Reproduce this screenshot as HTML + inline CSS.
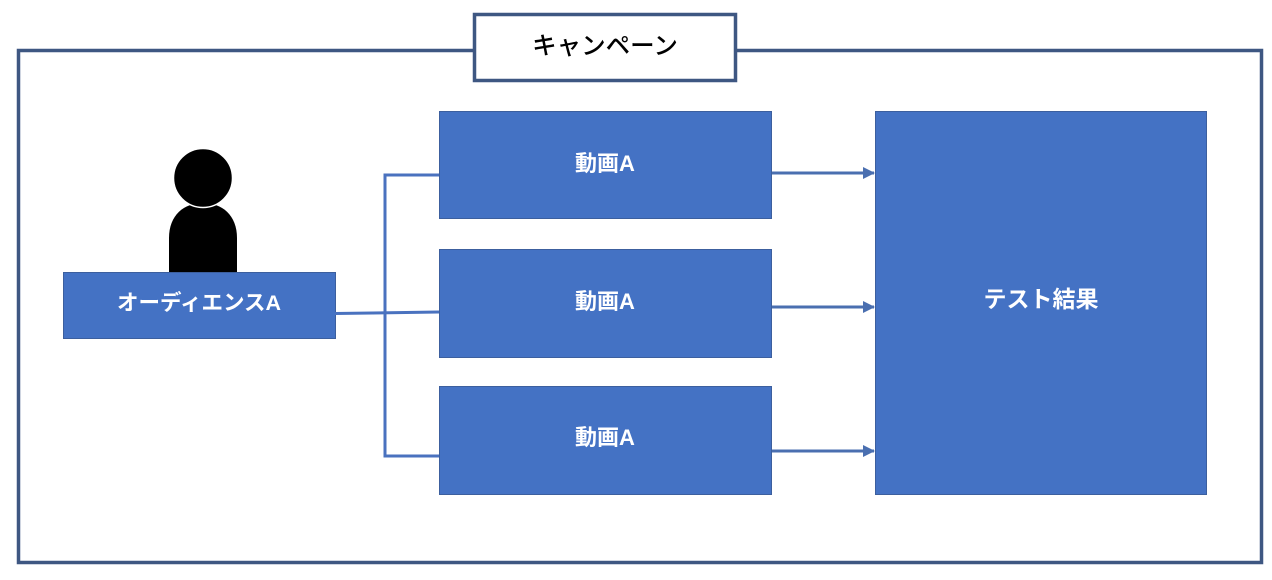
<!DOCTYPE html>
<html><head><meta charset="utf-8"><style>
html,body{margin:0;padding:0;background:#fff;width:1272px;height:580px;overflow:hidden}
svg{display:block}
text{font-family:"Liberation Sans","Noto Sans CJK JP",sans-serif}
</style></head><body>
<svg width="1272" height="580" viewBox="0 0 1272 580" xmlns="http://www.w3.org/2000/svg">
<defs>
<marker id="ar" markerWidth="12" markerHeight="12" refX="11" refY="6" orient="auto" markerUnits="userSpaceOnUse">
<path d="M0,0 L12,6 L0,12 Z" fill="#4a6fb0"/></marker>
</defs>
<rect x="18.5" y="50.5" width="1243" height="512" fill="#fff" stroke="#3e5782" stroke-width="3.5"/>
<rect x="474.5" y="14.5" width="261" height="66" fill="#fff" stroke="#3e5782" stroke-width="3.5"/>
<text x="605" y="54" font-size="24.5" font-weight="500" text-anchor="middle" fill="#000">キャンペーン</text>
<path d="M169,272 L169,238 C169,215 184,203 203,203 C222,203 237,215 237,238 L237,272 Z" fill="#000"/>
<circle cx="203" cy="178" r="29.5" fill="#000" stroke="#fff" stroke-width="1.5"/>
<rect x="63.5" y="272.5" width="272" height="66" fill="#4472c4" stroke="#3c5f9e" stroke-width="1"/>
<text x="199" y="310" font-size="21.5" font-weight="bold" text-anchor="middle" fill="#fff">オーディエンスA</text>
<g stroke="#4a72bf" stroke-width="3" fill="none">
<polyline points="439,175 385,175 385,456 439,456"/>
<line x1="335" y1="313.5" x2="439" y2="312"/>
</g>
<g stroke="#4a6fb0" stroke-width="3">
<line x1="771" y1="173" x2="874" y2="173" marker-end="url(#ar)"/>
<line x1="771" y1="307" x2="874" y2="307" marker-end="url(#ar)"/>
<line x1="771" y1="451" x2="874" y2="451" marker-end="url(#ar)"/>
</g>
<g fill="#4472c4" stroke="#3c5f9e" stroke-width="1">
<rect x="439.5" y="111.5" width="332" height="107"/>
<rect x="439.5" y="249.5" width="332" height="108"/>
<rect x="439.5" y="386.5" width="332" height="108"/>
<rect x="875.5" y="111.5" width="331" height="383"/>
</g>
<g font-size="22" font-weight="bold" fill="#fff" text-anchor="middle">
<text x="605" y="171">動画A</text>
<text x="605" y="309">動画A</text>
<text x="605" y="445">動画A</text>
<text x="1041" y="307" font-size="23">テスト結果</text>
</g>
</svg>
</body></html>
